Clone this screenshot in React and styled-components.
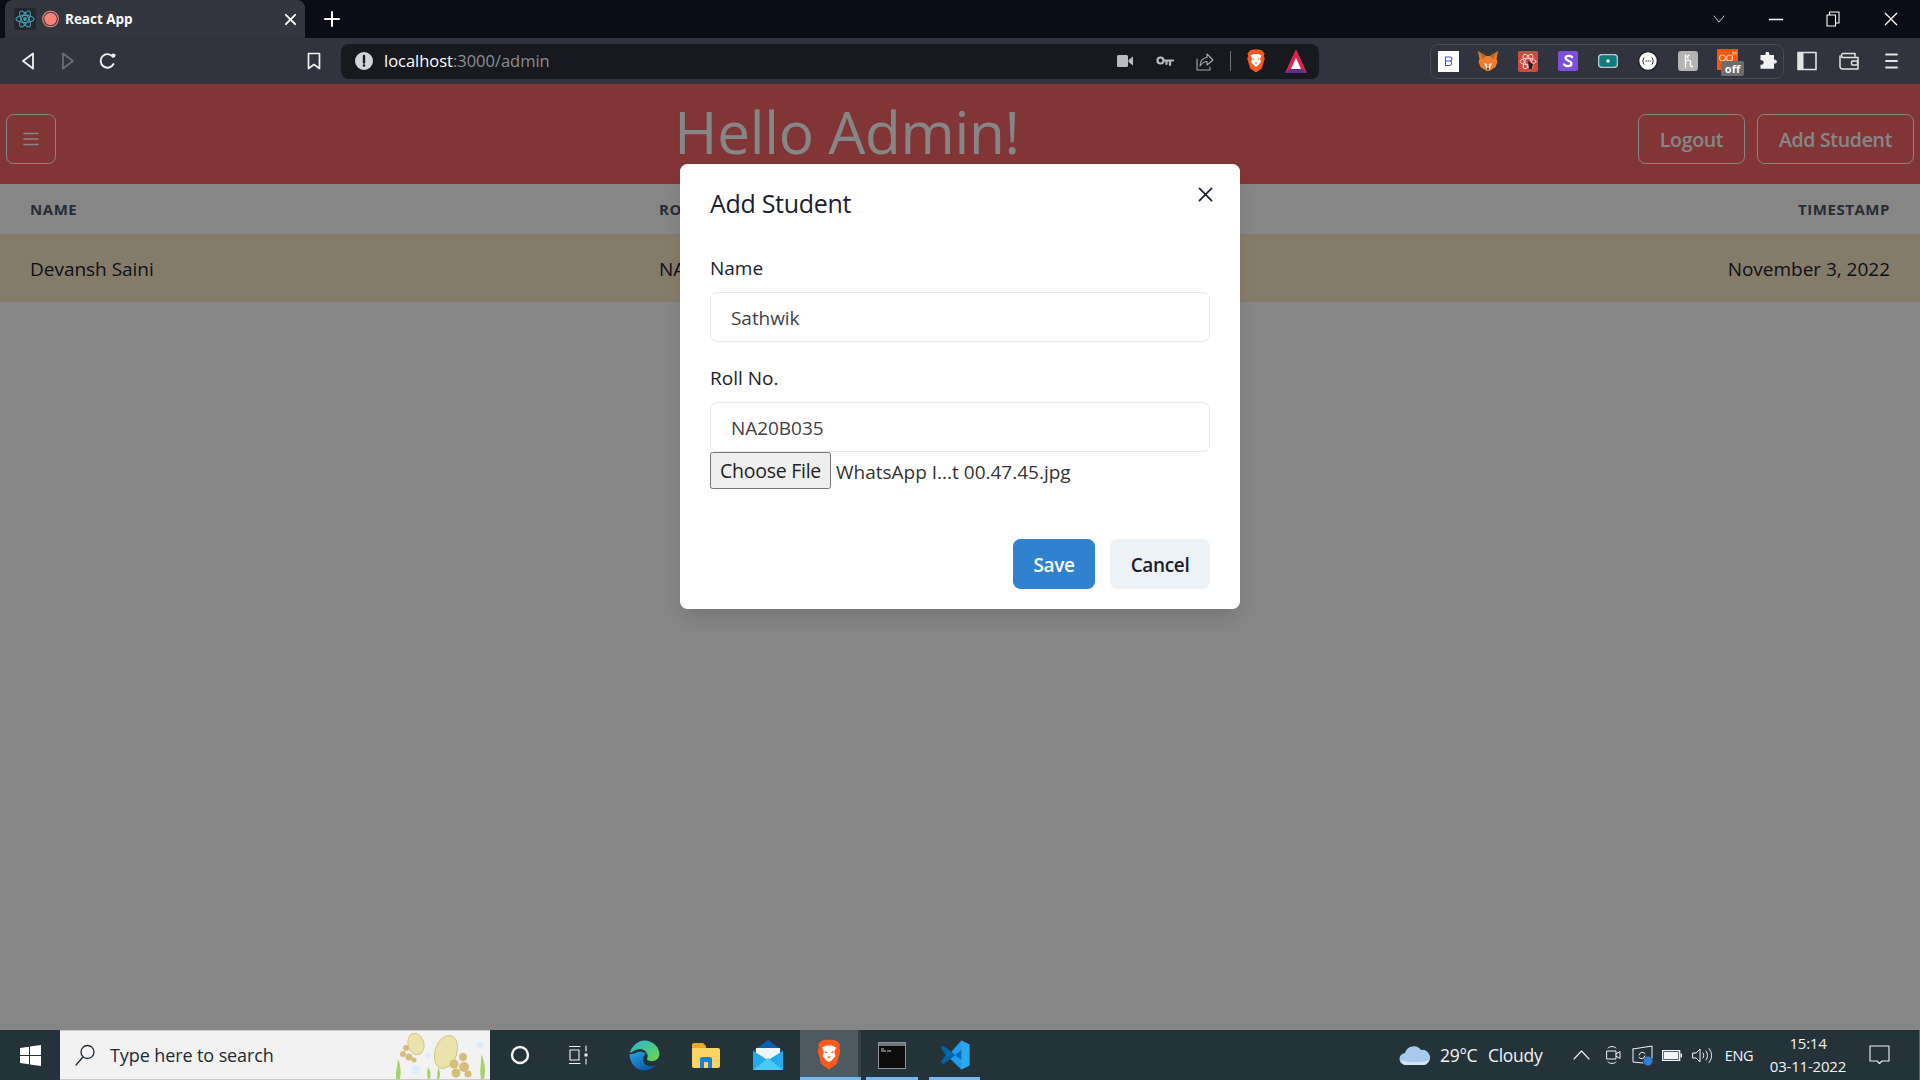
import React from "react";
import styled, { createGlobalStyle } from "styled-components";

const Global = createGlobalStyle`
  html, body { margin: 0; padding: 0; height: 100%; overflow: hidden; }
  #root { height: 100%; }
  * { box-sizing: border-box; }
  body { font-family: "Open Sans", "Noto Sans", sans-serif; }
`;

const Shell = styled.div`
  display: flex; flex-direction: column; width: 1920px; height: 1080px; overflow: hidden;
`;

/* ---------- browser chrome ---------- */
const TabStrip = styled.div`
  height: 38px; flex: none; display: flex; align-items: stretch; background: #0b0c15; padding-left: 5px; color: #fff;
`;
const Tab = styled.div`
  width: 300px; height: 38px; background: #33363f; border-radius: 8px 8px 0 0; display: flex; align-items: center;
  padding: 0 8px 0 9px; font-size: 13.5px; font-weight: 700; letter-spacing: -0.02px;
`;
const TabTitle = styled.span`margin-left: 6px; flex: 1;`;
const Slot = styled.div`
  width: ${p => p.$w}px; height: ${p => p.$h ? p.$h + "px" : "100%"}; flex: none; display: flex; align-items: center;
  justify-content: ${p => p.$start ? "flex-start" : "center"};
  margin-left: ${p => p.$ml || 0}px;
`;
const WindowControls = styled.div`
  margin-left: auto; height: 38px; display: flex; align-items: center;
`;
const Toolbar = styled.div`
  height: 46px; flex: none; background: #31343f; display: flex; align-items: center; padding-left: 8px;
`;
const UrlBar = styled.div`
  width: 978px; height: 35px; margin-left: 7px; background: #17191f; border-radius: 8px; display: flex; align-items: center; padding: 0 3px 0 14px;
`;
const UrlText = styled.span`
  margin: -2px 0 0 11px; font-size: 16.5px; letter-spacing: -0.02px; color: #fff;
`;
const UrlDim = styled.span`color: #8b8d93;`;
const UrlActions = styled.div`margin-left: auto; display: flex; align-items: center; height: 100%;`;
const UrlSep = styled.div`width: 1px; height: 20px; background: #70737a; margin: 0 5px;`;
const ExtBox = styled.div`
  width: 354px; height: 35px; margin-left: 111px; border: 1px solid #474a55; border-radius: 8px; display: flex; align-items: center; gap: 6px;
`;
const ToolGroup = styled.div`margin-left: 6px; display: flex; gap: 8px; height: 35px;`;
const ExtWrap = styled.div`position: relative; width: 22px; height: 24px;`;
const OffBadge = styled.span`
  position: absolute; left: 4px; top: 12px; width: 23px; height: 15px; background: #6d6d6d; border-radius: 2px; color: #fff;
  font: 700 11px/15px "Open Sans", sans-serif; text-align: center;
`;

/* ---------- page ---------- */
const Page = styled.div`
  position: relative; flex: 1; background: #fff; min-height: 0;
`;
const Header = styled.header`
  height: 100px; background: #f56565; display: flex; justify-content: space-between; align-items: flex-start; padding: 30px 6px 0;
  color: #fff;
`;
const Title = styled.h1`
  margin: -23px 0 0; font-size: 58.5px; font-weight: 400; line-height: 80px; letter-spacing: -0.3px; color: #fff;
`;
const HeaderActions = styled.div`display: flex; gap: 12px;`;
const GhostButton = styled.button`
  height: 50px; width: ${p => p.$w}px; border: 1px solid #fff; border-radius: 7.5px; background: transparent; color: #fff; padding: ${p => p.$icon ? 0 : "2px 0 0"};
  font: 600 19.5px/1 "Open Sans", sans-serif; letter-spacing: -0.3px; display: flex; align-items: center; justify-content: center;
`;
const TableRow = styled.div`
  display: grid; grid-template-columns: 629px 1fr auto; align-items: center; padding: ${p => p.$pt || 0}px 30px 0; height: ${p => p.$h}px;
  background: ${p => p.$bg || "transparent"};
`;
const HeadCell = styled.div`
  font-size: 15px; font-weight: 700; color: #4a5568; letter-spacing: 0.55px; text-transform: uppercase;
`;
const BodyCell = styled.div`
  font-size: 19px; color: #1a202c; letter-spacing: -0.02px;
`;
const Overlay = styled.div`
  position: absolute; inset: 0; background: rgba(0,0,0,.475); display: flex; justify-content: center; align-items: flex-start; padding-top: 80px;
`;
const Modal = styled.div`
  position: relative; width: 560px; height: 445px; background: #fff; border-radius: 7.5px; color: #1a202c; display: flex; flex-direction: column;
  box-shadow: 0 12px 18px -4px rgba(0,0,0,.12);
`;
const ModalHeader = styled.div`
  padding: 20px 30px 0; height: 80px; font-size: 25px; font-weight: 500; line-height: 39px; letter-spacing: -0.3px;
`;
const CloseButton = styled.button`
  position: absolute; top: 10px; right: 15px; width: 40px; height: 40px; border: 0; background: transparent; padding: 0;
  display: flex; align-items: center; justify-content: center; color: #1a202c;
`;
const ModalBody = styled.div`flex: 1; padding: 8px 30px 0; display: flex; flex-direction: column;`;
const Label = styled.label`
  display: block; font-size: 19px; line-height: 32px; height: 30px; font-weight: 500; margin-bottom: 10px; letter-spacing: 0;
`;
const Input = styled.input`
  display: block; width: 100%; height: 50px; border: 1px solid #e2e8f0; border-radius: 7.5px; padding: 1px 20px 0; margin-bottom: ${p => p.$mb || 0}px;
  font: 400 19px "Open Sans", sans-serif; letter-spacing: -0.05px; color: #3f3f46; background: #fff; outline: none;
`;
const FileRow = styled.div`display: flex; align-items: center; height: 37px;`;
const FileButton = styled.button`
  width: 121px; height: 37px; background: #efefef; border: 1px solid #767676; border-radius: 2.5px; padding: 0;
  font: 400 19.5px "Open Sans", sans-serif; letter-spacing: -0.25px; color: #222;
`;
const FileName = styled.span`margin-left: 5px; margin-top: 2px; font-size: 19px; color: #333; letter-spacing: 0;`;
const ModalFooter = styled.div`
  display: flex; justify-content: flex-end; gap: 15px; padding: 0 30px 20px;
`;
const ActionButton = styled.button`
  height: 50px; width: ${p => p.$w}px; border: 0; border-radius: 7.5px; padding: 2px 0 0;
  background: ${p => p.$primary ? "#3182ce" : "#edf2f7"}; color: ${p => p.$primary ? "#fff" : "#1a202c"};
  font: 600 19px "Open Sans", sans-serif; letter-spacing: -0.35px;
`;

/* ---------- taskbar ---------- */
const Taskbar = styled.div`
  height: 50px; flex: none; background: #24323a; display: flex; align-items: stretch; color: #fff;
`;
const SearchBox = styled.div`
  width: 430px; background: #f2f2f2; border-top: 1px solid #c9c9c9; border-bottom: 1px solid #c9c9c9; display: flex; align-items: center;
  position: relative; padding-left: 15px; color: #1f2a33; font-size: 18px; letter-spacing: -0.1px;
`;
const SearchText = styled.span`margin-left: 15px;`;
const Decoration = styled.div`position: absolute; right: 0; top: 0; height: 48px;`;
const AppSlot = styled.div`
  width: ${p => p.$w}px; flex: none; display: flex; align-items: center; justify-content: center; margin-left: ${p => p.$ml || 0}px;
  background: ${p => p.$active ? "#4d5a61" : "transparent"};
  border-bottom: ${p => p.$running ? "3px solid #76b9ed" : "0"};
  padding: ${p => p.$running ? "3px" : "0"} 0 0 ${p => p.$pl || 0}px;
`;
const Divider = styled.div`width: 3px; background: #333f47; border-bottom: 3px solid #76b9ed;`;
const Tray = styled.div`margin-left: auto; display: flex; align-items: center; font-size: 17.5px; letter-spacing: -0.3px; color: #f2f4f5; height: 100%;`;
const TrayText = styled.div`
  width: ${p => p.$w}px; flex: none; text-align: ${p => p.$center ? "center" : "left"}; white-space: nowrap; font-size: ${p => p.$fs || 17.5}px;
`;
const Clock = styled.div`
  width: 90px; flex: none; text-align: center; font-size: 15px; line-height: 23px; letter-spacing: -0.2px;
`;
const TrayEnd = styled.div`width: 15px; height: 100%; border-right: 1px solid #5b666c; flex: none;`;

/* ---------- drawings ---------- */
const S = ({ w = 20, h = 20, vb = "0 0 20 20", children, fill = "none", stroke = "none", sw = 1.6 }) => (
  <svg width={w} height={h} viewBox={vb} fill={fill} stroke={stroke} strokeWidth={sw} strokeLinecap="round" strokeLinejoin="round">{children}</svg>
);

const ReactIcon = () => (
  <S w={22} h={22} vb="0 0 22 22">
    <rect width="22" height="22" rx="3" fill="#23272d" />
    <g stroke="#3f9fb0" strokeWidth="1.1" fill="none">
      <ellipse cx="11" cy="11" rx="9" ry="3.6" />
      <ellipse cx="11" cy="11" rx="9" ry="3.6" transform="rotate(60 11 11)" />
      <ellipse cx="11" cy="11" rx="9" ry="3.6" transform="rotate(120 11 11)" />
    </g>
    <circle cx="11" cy="11" r="1.9" fill="#3f9fb0" />
  </S>
);
const RecordIcon = () => (
  <S w={17} h={18} vb="0 0 17 18">
    <circle cx="8.5" cy="9" r="7.8" fill="none" stroke="#f28b82" strokeWidth="1.1" />
    <circle cx="8.5" cy="9" r="6.2" fill="#f5837a" />
  </S>
);
const XIcon = ({ size = 14, color = "#fff", sw = 2 }) => (
  <S w={size} h={size} vb="0 0 14 14" stroke={color} sw={sw}><path d="M2 2l10 10M12 2L2 12" /></S>
);
const Plus = () => <S w={16} h={16} vb="0 0 16 16" stroke="#fff" sw={2}><path d="M8 1v14M1 8h14" /></S>;

const Brave = ({ size = 22 }) => (
  <S w={size} h={size * 1.2} vb="0 0 20 24">
    <path d="M4 1.5L7 .5h6l3 1 2.5 3-.6 2.5.9 2.500-3 10-5.800 4-5.800-4-3-10 .9-2.500L1.500 4.500z" fill="#fb5a1d" />
    <path d="M4.500 6.500L8 5h4l3.500 1.500-1.500 3.500 1 3-3 3.500-2 1.200-2-1.200-3-3.500 1-3z" fill="#fff" />
    <path d="M6.500 9l2.300 1.300-1.800.7zM13.500 9l-2.300 1.300 1.800.7zM8.500 13.500h3L10 15z" fill="#fb5a1d" />
  </S>
);
const BatTriangle = () => (
  <S w={24} h={26} vb="0 0 24 26">
    <path d="M12 1L23 25H1z" fill="#d8264f" />
    <path d="M1 25l5-4h12l5 4z" fill="#662d91" />
    <path d="M12 10l5 11H7z" fill="#fff" />
  </S>
);
const Fox = () => (
  <S w={22} h={22} vb="0 0 22 22">
    <path d="M1 1l8 5h4l8-5-1.500 8 1 3-2 5-4.500 3-1.500 1h-3l-1.500-1-4.500-3-2-5 1-3z" fill="#ed7d2c" />
    <path d="M7 13l3 1 .5 4h1l.5-4 3-1-2 6-1 1h-1.500l-1-1z" fill="#f4e3d3" />
    <path d="M10 18h2l-.5 2h-1z" fill="#2a2a2a" />
    <path d="M1 1l8 5-3 3zM21 1l-8 5 3 3z" fill="#b6661f" />
  </S>
);
const AtomIcon = () => (
  <S w={20} h={21} vb="0 0 20 21">
    <rect width="20" height="21" rx="2" fill="#d04a40" />
    <g stroke="#f3d4d0" strokeWidth="1" fill="none">
      <ellipse cx="10" cy="10.500" rx="8" ry="3.200" />
      <ellipse cx="10" cy="10.500" rx="8" ry="3.200" transform="rotate(60 10 10.500)" />
      <ellipse cx="10" cy="10.500" rx="8" ry="3.200" transform="rotate(120 10 10.500)" />
    </g>
    <path d="M10 10l5 3-1 5h-3z" fill="#2b1d1d" />
  </S>
);
const Teal = () => (
  <S w={20} h={14} vb="0 0 20 14">
    <rect x=".5" y=".5" width="19" height="13" rx="3.500" fill="#0f7b7c" stroke="#b7c6c8" />
    <circle cx="10" cy="7" r="1.800" fill="#fff" />
  </S>
);
const Puzzle = () => (
  <S w={18} h={18} vb="0 0 18 18">
    <path d="M6.500 1.200a2 2 0 0 1 3.800 0v1.800h4.700v4.700h1.500a2 2 0 0 1 0 3.800H15v5.300H1.500v-4h.9a2.300 2.300 0 0 0 0-4.600h-.9V3h5z" fill="#f2f2f2" />
  </S>
);
const Jelly = () => (
  <S w={94} h={48} vb="0 0 94 48">
    <path d="M0 48c-1-8 2-14 2-20 3 6 3 14 2 20zM32 48c-2-5 0-9 0-12 3 4 3 8 2 12zM41 48c0-5 1-8 1-12 2 4 3 8 1 12zM85 48c-2-9 1-17 0-25 4 7 5 17 3 25z" fill="#a9d36a" />
    <g fill="#ece2ab" stroke="#cdb877" strokeWidth=".7">
      <ellipse cx="20" cy="13" rx="8" ry="11" transform="rotate(-15 20 13)" />
      <ellipse cx="50" cy="21" rx="11" ry="17" transform="rotate(18 50 21)" />
    </g>
    <g fill="#d8bd7a">
      <circle cx="10" cy="17" r="3" /><circle cx="7" cy="23" r="3" /><circle cx="13" cy="26" r="3.500" /><circle cx="18" cy="29" r="2.500" />
      <circle cx="67" cy="26" r="4" /><circle cx="58" cy="33" r="4.500" /><circle cx="68" cy="36" r="5" /><circle cx="60" cy="42" r="4.500" /><circle cx="72" cy="43" r="3.500" />
    </g>
    <g fill="#d9eefa"><circle cx="32" cy="24" r="2.500" /><circle cx="20" cy="39" r="4.500" /><circle cx="84" cy="14" r="3.500" /></g>
  </S>
);
const Edge = () => (
  <svg width="31" height="31" viewBox="0 0 30 30">
    <defs>
      <linearGradient id="eg1" x1="0" y1="0" x2="0.8" y2="1"><stop offset="0" stopColor="#2aa7e5" /><stop offset="1" stopColor="#0a4f9e" /></linearGradient>
      <linearGradient id="eg2" x1="0" y1="0" x2="1" y2="1"><stop offset="0" stopColor="#25b5d8" /><stop offset="1" stopColor="#6fd743" /></linearGradient>
    </defs>
    <path d="M.5 14C.5 22 7 29.500 15 29.500c5 0 8.500-2 11.500-5.500-5 2.500-10 1.500-12-2-1.500-3-.5-7 2-9-3.500-2-7-2-10-.5-2.500 1.200-5 1-6.500 1.500z" fill="url(#eg1)" />
    <path d="M.7 13C2.500 6 8.500.5 15 .5c8 0 14.500 6.500 14.500 13 0 4-3.500 7-7.500 7-3 0-5-1-4.500-2.500 1-1.500 1-4-1-6.500C14 8.500 10 8 7 9.500 4 11 2 12 .7 13z" fill="url(#eg2)" />
  </svg>
);
const Folder = () => (
  <svg width="28" height="26" viewBox="0 0 28 26">
    <path d="M0 3a2 2 0 0 1 2-2h9l3 3v3H0z" fill="#e9a820" />
    <path d="M0 6h26a2 2 0 0 1 2 2v16a2 2 0 0 1-2 2H2a2 2 0 0 1-2-2z" fill="#fcd463" />
    <path d="M8 26v-9a2 2 0 0 1 2-2h8a2 2 0 0 1 2 2v9h-4v-6h-4v6z" fill="#1c7fd6" />
    <rect x="12" y="20" width="4" height="6" fill="#fcd463" />
  </svg>
);
const Mail = () => (
  <svg width="30" height="30" viewBox="0 0 30 30">
    <path d="M15 0L30 11v19H0V11z" fill="#0a5fb0" />
    <path d="M3 8h24v12L15 27 3 20z" fill="#f2f5f8" />
    <path d="M0 11l15 9 15-9v19H0z" fill="#24a9ea" />
    <path d="M0 30l15-12 15 12z" fill="#4dc8f5" />
  </svg>
);
const Terminal = () => (
  <svg width="28" height="27" viewBox="0 0 28 27">
    <rect x=".5" y=".5" width="27" height="26" fill="#0c0c0c" stroke="#8e9499" />
    <rect x="1" y="1" width="26" height="3" fill="#6f757a" />
    <path d="M3 7h3M3 9h5M9 9h4" stroke="#c8c8c8" strokeWidth="1" />
  </svg>
);
const VSCode = () => (
  <svg width="30" height="30" viewBox="0 0 100 100">
    <path d="M71 2l27 13v70L71 98 25 54z" fill="#1f9cf0" />
    <path d="M71 2v96L98 85V15z" fill="#2aa8f2" />
    <path d="M25 29l-14-10L2 26l17 24L2 74l9 7 14-10 46-37V66L25 29z" fill="#0065a9" />
  </svg>
);

export default function App() {
  return (
    <Shell>
      <Global />
      <TabStrip>
        <Tab>
          <ReactIcon />
          <Slot $w={17} $ml={6} $h={20}><RecordIcon /></Slot>
          <TabTitle>React App</TabTitle>
          <XIcon size={13} />
        </Tab>
        <Slot $w={54}><Plus /></Slot>
        <WindowControls>
          <Slot $w={57}><S w={12} h={8} vb="0 0 12 8" stroke="#c9cbd0" sw={1}><path d="M1 1l5 6 5-6" /></S></Slot>
          <Slot $w={57}><S w={14} h={3} vb="0 0 14 3" stroke="#fff" sw={1.3}><path d="M0 1.500h14" /></S></Slot>
          <Slot $w={58}><S w={14} h={16} vb="0 0 14 16" stroke="#fff" sw={1.1}><path d="M1 4h8.500v11H1zM3.500 4V1H13v11h-3.500" /></S></Slot>
          <Slot $w={58}><XIcon size={16} sw={1.1} /></Slot>
        </WindowControls>
      </TabStrip>

      <Toolbar>
        <Slot $w={40}><S w={14} h={18} vb="0 0 14 18" stroke="#f2f2f2" sw={1.8}><path d="M12 1.500v15L2 9z" /></S></Slot>
        <Slot $w={40}><S w={14} h={18} vb="0 0 14 18" stroke="#6a6d77" sw={1.8}><path d="M2 1.500v15L12 9z" /></S></Slot>
        <Slot $w={40}><S w={18} h={18} vb="0 0 18 18" stroke="#f2f2f2" sw={1.9}><path d="M14.500 12a6.800 6.800 0 1 1-.6-7.200" /><circle cx="14.500" cy="3.500" r="2" fill="#f2f2f2" stroke="none" /></S></Slot>
        <Slot $w={40} $ml={166}><S w={14} h={18} vb="0 0 14 18" stroke="#f2f2f2" sw={1.7}><path d="M1.500 1.500h11v15L7 12.500l-5.500 4z" /></S></Slot>
        <UrlBar>
          <S w={18} h={18} vb="0 0 18 18"><circle cx="9" cy="9" r="9" fill="#d4d5d8" /><path d="M9 4v6.500" stroke="#17191f" strokeWidth="2.400" /><circle cx="9" cy="13.500" r="1.300" fill="#17191f" /></S>
          <UrlText>localhost<UrlDim>:3000/admin</UrlDim></UrlText>
          <UrlActions>
            <Slot $w={40}><S w={16} h={12} vb="0 0 16 12"><rect width="11" height="12" rx="1.500" fill="#b9bbbf" /><path d="M11.500 5L16 1.500v9L11.500 7z" fill="#b9bbbf" /></S></Slot>
            <Slot $w={40}><S w={18} h={12} vb="0 0 18 12" stroke="#b9bbbf" sw={2.200}><circle cx="4.500" cy="5.500" r="3" /><path d="M8 5.500h9M14 5.500V10M10.500 5.500V9" /></S></Slot>
            <Slot $w={40}><S w={18} h={20} vb="0 0 18 20" stroke="#a9abb0" sw={1.100}><path d="M4 15c0-5 3-8 7-8.500V3l6 6-6 5v-3.500C8 10.500 6 12 4 15zM1 8v11h13v-3" /></S></Slot>
            <UrlSep />
            <Slot $w={40}><Brave size={20} /></Slot>
            <Slot $w={40}><BatTriangle /></Slot>
          </UrlActions>
        </UrlBar>
        <ExtBox>
          <Slot $w={34}><S w={21} h={21} vb="0 0 21 21"><rect width="21" height="21" fill="#fff" /><path d="M7.500 6h4a2 2 0 0 1 .6 4 2.300 2.300 0 0 1-.6 4.500h-4zM7.500 10h4" stroke="#4a50c4" strokeWidth="1.100" fill="none" /></S></Slot>
          <Slot $w={34}><Fox /></Slot>
          <Slot $w={34}><AtomIcon /></Slot>
          <Slot $w={34}><S w={20} h={20} vb="0 0 20 20"><rect width="20" height="20" rx="2" fill="#7e4fdb" /><path d="M14 6c-1-1.500-6-2-6.500.8C7 10 14 9.500 13.500 13c-.4 2.800-6 2.500-7.500.5" stroke="#fff" strokeWidth="2.300" fill="none" /></S></Slot>
          <Slot $w={34}><Teal /></Slot>
          <Slot $w={34}><S w={20} h={20} vb="0 0 20 20"><circle cx="10" cy="10" r="9.500" fill="#fff" stroke="#222" /><path d="M6 6.500c-1.500 0 0 3.500-1.500 3.500 1.500 0 0 3.500 1.500 3.500M14 6.500c1.500 0 0 3.500 1.500 3.500-1.500 0 0 3.500-1.500 3.500M8 10h.5M10 10h.5M12 10h.5" stroke="#222" strokeWidth="1" fill="none" /></S></Slot>
          <Slot $w={34}><S w={20} h={20} vb="0 0 20 20"><rect width="20" height="20" rx="3" fill="#b4b4b4" /><path d="M7.500 4v12M7.500 11c1-2.500 5-2.500 5 0v3c0 1.500 1 2 2 1.500M11 4.500c-1.500 0-2 1.500-1 2.500" stroke="#fff" strokeWidth="1.400" fill="none" /></S></Slot>
          <Slot $w={34}>
            <ExtWrap>
              <S w={21} h={21} vb="0 0 21 21"><rect width="21" height="21" fill="#f2590f" /><circle cx="5.500" cy="9" r="3" fill="none" stroke="#ffc9a8" strokeWidth="1.200" /><circle cx="12.500" cy="9" r="3" fill="none" stroke="#ffc9a8" strokeWidth="1.200" /><path d="M16 6V2.500l1.500 2 1.500-2V6" stroke="#ffc9a8" strokeWidth=".8" fill="none" /></S>
              <OffBadge>off</OffBadge>
            </ExtWrap>
          </Slot>
          <Slot $w={34}><Puzzle /></Slot>
        </ExtBox>
        <ToolGroup>
          <Slot $w={34}><S w={20} h={20} vb="0 0 20 20"><path d="M1 1.500h18v17H1z" fill="none" stroke="#e4e4e4" strokeWidth="1.600" /><rect x="1" y="1.500" width="5.500" height="17" fill="#e4e4e4" /></S></Slot>
          <Slot $w={34}><S w={20} h={18} vb="0 0 20 18" stroke="#e4e4e4" sw={1.500}><path d="M16 4V1.500H3.500a2.500 2.500 0 0 0 0 4M1 4v10.500A2.500 2.500 0 0 0 3.500 17H19V5.500H3" /><rect x="12.500" y="9" width="6" height="4" rx="1" /></S></Slot>
          <Slot $w={34}><S w={13} h={16} vb="0 0 13 16" stroke="#e4e4e4" sw={1.800}><path d="M1 1.500h11M1 8h11M1 14.500h11" /></S></Slot>
        </ToolGroup>
      </Toolbar>

      <Page>
        <Header>
          <GhostButton $icon $w={50}><S w={16} h={14} vb="0 0 16 14" stroke="#fff" sw={1.600}><path d="M1 1.500h14M1 7h14M1 12.500h14" /></S></GhostButton>
          <Title>Hello Admin!</Title>
          <HeaderActions>
            <GhostButton $w={107}>Logout</GhostButton>
            <GhostButton $w={157}>Add Student</GhostButton>
          </HeaderActions>
        </Header>
        <TableRow $h={50}>
          <HeadCell>Name</HeadCell>
          <HeadCell>Roll No.</HeadCell>
          <HeadCell>Timestamp</HeadCell>
        </TableRow>
        <TableRow $h={68} $pt={2} $bg="#feebc8">
          <BodyCell>Devansh Saini</BodyCell>
          <BodyCell>NA20B035</BodyCell>
          <BodyCell>November 3, 2022</BodyCell>
        </TableRow>
        <Overlay>
          <Modal>
            <ModalHeader>Add Student</ModalHeader>
            <CloseButton aria-label="Close"><XIcon size={17} color="#1a202c" sw={1.400} /></CloseButton>
            <ModalBody>
              <Label>Name</Label>
              <Input defaultValue="Sathwik" $mb={20} />
              <Label>Roll No.</Label>
              <Input defaultValue="NA20B035" />
              <FileRow>
                <FileButton>Choose File</FileButton>
                <FileName>WhatsApp I...t 00.47.45.jpg</FileName>
              </FileRow>
            </ModalBody>
            <ModalFooter>
              <ActionButton $primary $w={82}>Save</ActionButton>
              <ActionButton $w={100}>Cancel</ActionButton>
            </ModalFooter>
          </Modal>
        </Overlay>
      </Page>

      <Taskbar>
        <Slot $w={60}><S w={21} h={21} vb="0 0 21 21" fill="#fff"><path d="M0 3l9-1.300V10H0zM10 1.500L21 0v10H10zM0 11h9v8.300L0 18zM10 11h11v10l-11-1.500z" /></S></Slot>
        <SearchBox>
          <S w={20} h={22} vb="0 0 20 22" stroke="#1f2a33" sw={1.300}><circle cx="12.500" cy="8" r="6.500" /><path d="M8 13l-7 8" /></S>
          <SearchText>Type here to search</SearchText>
          <Decoration><Jelly /></Decoration>
        </SearchBox>
        <AppSlot $w={60}><S w={20} h={20} vb="0 0 20 20" stroke="#f2f2f2" sw={2.400}><circle cx="10" cy="10" r="8" /></S></AppSlot>
        <AppSlot $w={58}><S w={20} h={20} vb="0 0 20 20" stroke="#f2f2f2" sw={1.100}><path d="M0 1.500h11M0 18.500h11M1 5h9v10H1zM17 1v5M17 14v5" /><rect x="15.500" y="8.500" width="3" height="3" fill="#f2f2f2" stroke="none" /></S></AppSlot>
        <AppSlot $w={72}><Edge /></AppSlot>
        <AppSlot $w={52}><Folder /></AppSlot>
        <AppSlot $w={68} $pl={4}><Mail /></AppSlot>
        <AppSlot $w={58} $active $running><Brave size={26} /></AppSlot>
        <Divider />
        <AppSlot $w={52} $ml={5} $running><Terminal /></AppSlot>
        <AppSlot $w={51} $ml={11} $running><VSCode /></AppSlot>
        <Tray>
          <Slot $w={41} $start><S w={32} h={22} vb="0 0 32 22"><path d="M7 21a6 6 0 0 1-1-12 9 9 0 0 1 16-3 7 7 0 0 1 3 15z" fill="#a8c8ee" /><path d="M2 16c6 3 22 3 28 0-1 3-3 5-6 5H7c-3 0-4-2-5-5z" fill="#d6e6f7" /></S></Slot>
          <TrayText $w={48}>29°C</TrayText>
          <TrayText $w={55}>Cloudy</TrayText>
          <Slot $w={22} />
          <Slot $w={32}><S w={17} h={10} vb="0 0 17 10" stroke="#f2f4f5" sw={1.100}><path d="M1 9l7.500-8L16 9" /></S></Slot>
          <Slot $w={32}><S w={15} h={20} vb="0 0 15 20" stroke="#f2f4f5" sw={1}><path d="M1 6h9v8H1zM10 9l4-2.500v7L10 11M2 3c2-2 6-2 8 0M2 17c2 2 6 2 8 0" /></S></Slot>
          <Slot $w={26}><S w={21} h={21} vb="0 0 21 21" stroke="#f2f4f5" sw={1}><path d="M1 4l19-3v12M1 4v13l10 1" /><path d="M7 10a3.500 3.500 0 0 1 6-1.500M13 11a3.500 3.500 0 0 1-6 1.500" /><circle cx="16" cy="16" r="4.500" fill="#2d7fd1" stroke="none" /></S></Slot>
          <Slot $w={34}><S w={20} h={11} vb="0 0 20 11"><rect x=".5" y=".5" width="17" height="10" fill="none" stroke="#f2f4f5" /><rect x="2" y="2" width="14" height="7" fill="#f2f4f5" /><rect x="18.500" y="3.500" width="1.500" height="4" fill="#f2f4f5" /></S></Slot>
          <Slot $w={26}><S w={21} h={17} vb="0 0 21 17" stroke="#f2f4f5" sw={1}><path d="M1 6h3l4-4v13l-4-4H1zM11 6c1 1.500 1 3.500 0 5M14 4c2 2.500 2 6.500 0 9M17 1.500c3.500 4 3.500 10 0 14" /></S></Slot>
          <TrayText $w={48} $center $fs={14.500}>ENG</TrayText>
          <Clock>15:14<br />03-11-2022</Clock>
          <Slot $w={52}><S w={21} h={20} vb="0 0 21 20" stroke="#f2f4f5" sw={1.100}><path d="M1 1h19v15h-7l-2.500 2.500L8 16H1z" /></S></Slot>
          <TrayEnd />
        </Tray>
      </Taskbar>
    </Shell>
  );
}
